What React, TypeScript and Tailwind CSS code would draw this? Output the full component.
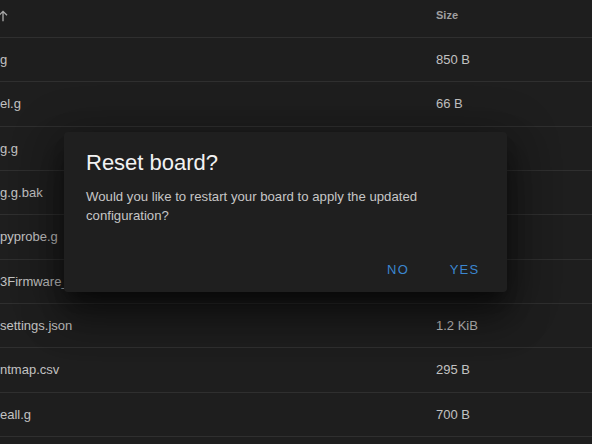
import React from 'react';

interface FileRow {
  name: string;
  size: string;
}

const rows: FileRow[] = [
  { name: 'g', size: '850 B' },
  { name: 'el.g', size: '66 B' },
  { name: 'g.g', size: '1.1 KiB' },
  { name: 'g.g.bak', size: '1.1 KiB' },
  { name: 'pyprobe.g', size: '412 B' },
  { name: '3Firmware_', size: '1.9 MiB' },
  { name: 'settings.json', size: '1.2 KiB' },
  { name: 'ntmap.csv', size: '295 B' },
  { name: 'eall.g', size: '700 B' },
  { name: '', size: '' },
];

const SortArrow: React.FC = () => (
  <svg width="16" height="16" viewBox="0 0 24 24" className="text-[#a8a8a8] -ml-[5px]">
    <path d="M12 20V5M6 11l6-6 6 6" fill="none" stroke="currentColor" strokeWidth="2" />
  </svg>
);

const ResetDialog: React.FC = () => {
  return (
    <div className="absolute left-[64px] top-[132px] w-[443px] bg-[#1f1f1f] rounded-[4px] shadow-[0_11px_15px_-7px_rgba(0,0,0,0.45),0_24px_38px_3px_rgba(0,0,0,0.35),0_9px_46px_8px_rgba(0,0,0,0.3)]">
      <h2 className="px-[22px] pt-[16px] pb-[9px] text-[22px] leading-[29.5px] text-[#f2f2f2]">Reset board?</h2>
      <p className="px-[22px] pb-[18.5px] text-[13.2px] leading-[19.4px] text-[#c6c6c6]">
        Would you like to restart your board to apply the updated configuration?
      </p>
      <div className="flex justify-end gap-[7.5px] pt-[9px] pb-[6px] pr-[13px]">
        <button className="w-[59px] h-[33px] text-[13px] uppercase tracking-[1.15px] text-[#3b86cf]">No</button>
        <button className="w-[59px] h-[33px] text-[13px] uppercase tracking-[1.15px] text-[#3b86cf]">Yes</button>
      </div>
    </div>
  );
};

const App: React.FC = () => {
  return (
    <div className="relative w-[592px] h-[444px] overflow-hidden bg-[#1e1e1e] font-['Liberation_Sans',Arial,sans-serif]">
      <div className="flex items-center h-[38px] pb-[6px] border-b border-[#2f2f2f]">
        <div className="w-[436px] flex items-center">
          <SortArrow />
        </div>
        <div className="text-[11px] font-bold text-[#a0a0a0]">Size</div>
      </div>
      {rows.map((row, i) => (
        <div key={i} className="flex items-center h-[44.33px] border-b border-[#2f2f2f] text-[13px] text-[#c2c2c2]">
          <div className="w-[436px] overflow-hidden whitespace-nowrap">{row.name}</div>
          <div>{row.size}</div>
        </div>
      ))}
      <ResetDialog />
    </div>
  );
};

export default App;
